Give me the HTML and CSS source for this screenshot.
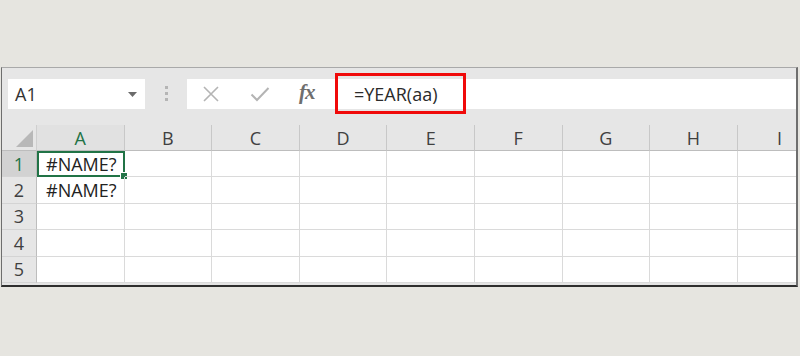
FILE: index.html
```html
<!DOCTYPE html>
<html>
<head>
<meta charset="utf-8">
<link rel="stylesheet" href="styles.css">
</head>
<body>
<div class="window">
  <div class="toolbar">
    <div class="namebox">
      <span class="nb-text">A1</span>
      <svg class="nb-arrow" width="9" height="5" viewBox="0 0 9 5"><path d="M0 0H9L4.5 5Z" fill="#6b6b6b"/></svg>
    </div>
    <div class="grip"><i></i><i></i><i></i></div>
    <div class="fbtns">
      <svg class="ic-x" width="18" height="18" viewBox="0 0 18 18"><path d="M2 2L16 16M16 2L2 16" stroke="#b4b4b4" stroke-width="1.6" fill="none"/></svg>
      <svg class="ic-ok" width="20" height="16" viewBox="0 0 20 16"><path d="M1.5 8.5L7 14L18.5 2" stroke="#b4b4b4" stroke-width="2" fill="none"/></svg>
      <span class="fx">fx</span>
    </div>
    <div class="formula">
      <span class="ftext">=YEAR(aa)</span>
      <div class="highlight"></div>
    </div>
  </div>
  <div class="sheet">
    <div class="corner"><svg width="17" height="17" viewBox="0 0 17 17"><path d="M17 0V17H0Z" fill="#b8b8b8"/></svg></div>
    <div class="ch active">A</div>
    <div class="ch">B</div>
    <div class="ch">C</div>
    <div class="ch">D</div>
    <div class="ch">E</div>
    <div class="ch">F</div>
    <div class="ch">G</div>
    <div class="ch">H</div>
    <div class="ch last">I</div>

    <div class="rh active">1</div>
    <div class="c sel">#NAME?<span class="handle"></span></div>
    <div class="c"></div><div class="c"></div><div class="c"></div><div class="c"></div><div class="c"></div><div class="c"></div><div class="c"></div><div class="c last"></div>

    <div class="rh">2</div>
    <div class="c">#NAME?</div>
    <div class="c"></div><div class="c"></div><div class="c"></div><div class="c"></div><div class="c"></div><div class="c"></div><div class="c"></div><div class="c last"></div>

    <div class="rh">3</div>
    <div class="c"></div><div class="c"></div><div class="c"></div><div class="c"></div><div class="c"></div><div class="c"></div><div class="c"></div><div class="c"></div><div class="c last"></div>

    <div class="rh">4</div>
    <div class="c"></div><div class="c"></div><div class="c"></div><div class="c"></div><div class="c"></div><div class="c"></div><div class="c"></div><div class="c"></div><div class="c last"></div>

    <div class="rh">5</div>
    <div class="c"></div><div class="c"></div><div class="c"></div><div class="c"></div><div class="c"></div><div class="c"></div><div class="c"></div><div class="c"></div><div class="c last"></div>
  </div>
</div>
</body>
</html>
```
FILE: styles.css
```css
html, body {
  margin: 0;
  padding: 0;
  background: #e6e5e0;
  font-family: "Open Sans", "Noto Sans", sans-serif;
}
body {
  padding-top: 67px;
}
.window {
  margin-left: 1px;
  width: 797px;
  box-sizing: border-box;
  border-top: 1px solid #a9a9a9;
  border-left: 1px solid #6e6e6e;
  border-right: 2px solid #6e6e6e;
  border-bottom: 2px solid #2e2e2e;
  background: #e6e6e6;
}
.toolbar {
  height: 57px;
  display: flex;
  align-items: flex-start;
  padding-top: 11px;
  box-sizing: border-box;
  padding-left: 6px;
}
.namebox {
  width: 137px;
  height: 30px;
  background: #fff;
  display: flex;
  align-items: center;
  justify-content: space-between;
  box-sizing: border-box;
  padding: 0 8px 0 7px;
  font-size: 18px;
  color: #333;
}
.nb-text { line-height: 1; }
.grip {
  width: 42px;
  display: flex;
  flex-direction: column;
  align-items: center;
  gap: 3px;
  padding-top: 7px;
}
.grip i {
  display: block;
  width: 3px;
  height: 3px;
  background: #b5b5b5;
}
.fbtns {
  width: 149px;
  height: 30px;
  background: #fff;
  display: flex;
  align-items: center;
  box-sizing: border-box;
  padding-left: 15px;
}
.ic-x { margin-right: 30px; }
.ic-ok { margin-right: 29px; }
.fx {
  font-family: "Liberation Serif", "DejaVu Serif", serif;
  font-style: italic;
  font-weight: bold;
  font-size: 21px;
  color: #6e6e6e;
  letter-spacing: -1px;
  line-height: 1;
  margin-top: -3px;
}
.formula {
  position: relative;
  flex: 1;
  height: 30px;
  margin-left: 1px;
  background: #fff;
  display: flex;
  align-items: center;
  padding-left: 17px;
  font-size: 18px;
  color: #2b2b2b;
}
.highlight {
  position: absolute;
  left: -2px;
  top: -6px;
  width: 131px;
  height: 41px;
  box-sizing: border-box;
  border: 3px solid #f00a0a;
}
.sheet {
  display: grid;
  grid-template-columns: 35px repeat(8, 87.6px) 1fr;
  grid-template-rows: 26px repeat(5, 26.4px);
  background: #fff;
  border-bottom: 2px solid #e4e4e4;
}
.corner {
  background: #e6e6e6;
  border-right: 1px solid #cfcfcf;
  border-bottom: 1px solid #bdbdbd;
  display: flex;
  align-items: flex-end;
  justify-content: flex-end;
  padding: 0 3px 3px 0;
  box-sizing: border-box;
}
.ch {
  background: #e6e6e6;
  border-right: 1px solid #c8c8c8;
  border-bottom: 1px solid #bdbdbd;
  display: flex;
  align-items: center;
  justify-content: center;
  font-size: 18px;
  color: #404040;
  box-sizing: border-box;
}
.ch.active { background: #e1e1e1; color: #217346; }
.ch.last { border-right: none; justify-content: flex-end; padding-right: 14px; }
.rh {
  background: #e6e6e6;
  border-right: 1px solid #bdbdbd;
  border-bottom: 1px solid #d4d4d4;
  display: flex;
  align-items: center;
  justify-content: center;
  font-size: 18px;
  color: #404040;
  box-sizing: border-box;
}
.rh.active { background: #d2d2d2; color: #217346; }
.c {
  position: relative;
  border-right: 1px solid #dadada;
  border-bottom: 1px solid #dadada;
  box-sizing: border-box;
  font-size: 18px;
  color: #222;
  display: flex;
  align-items: center;
  padding-left: 9px;
}
.c.last { border-right: none; }
.c.sel {
  outline: 2px solid #217346;
  outline-offset: -2px;
}
.handle {
  position: absolute;
  right: -3px;
  bottom: -3px;
  width: 6px;
  height: 6px;
  background: #217346;
  border: 1px solid #fff;
  box-sizing: content-box;
  margin: -1px;
}
```
